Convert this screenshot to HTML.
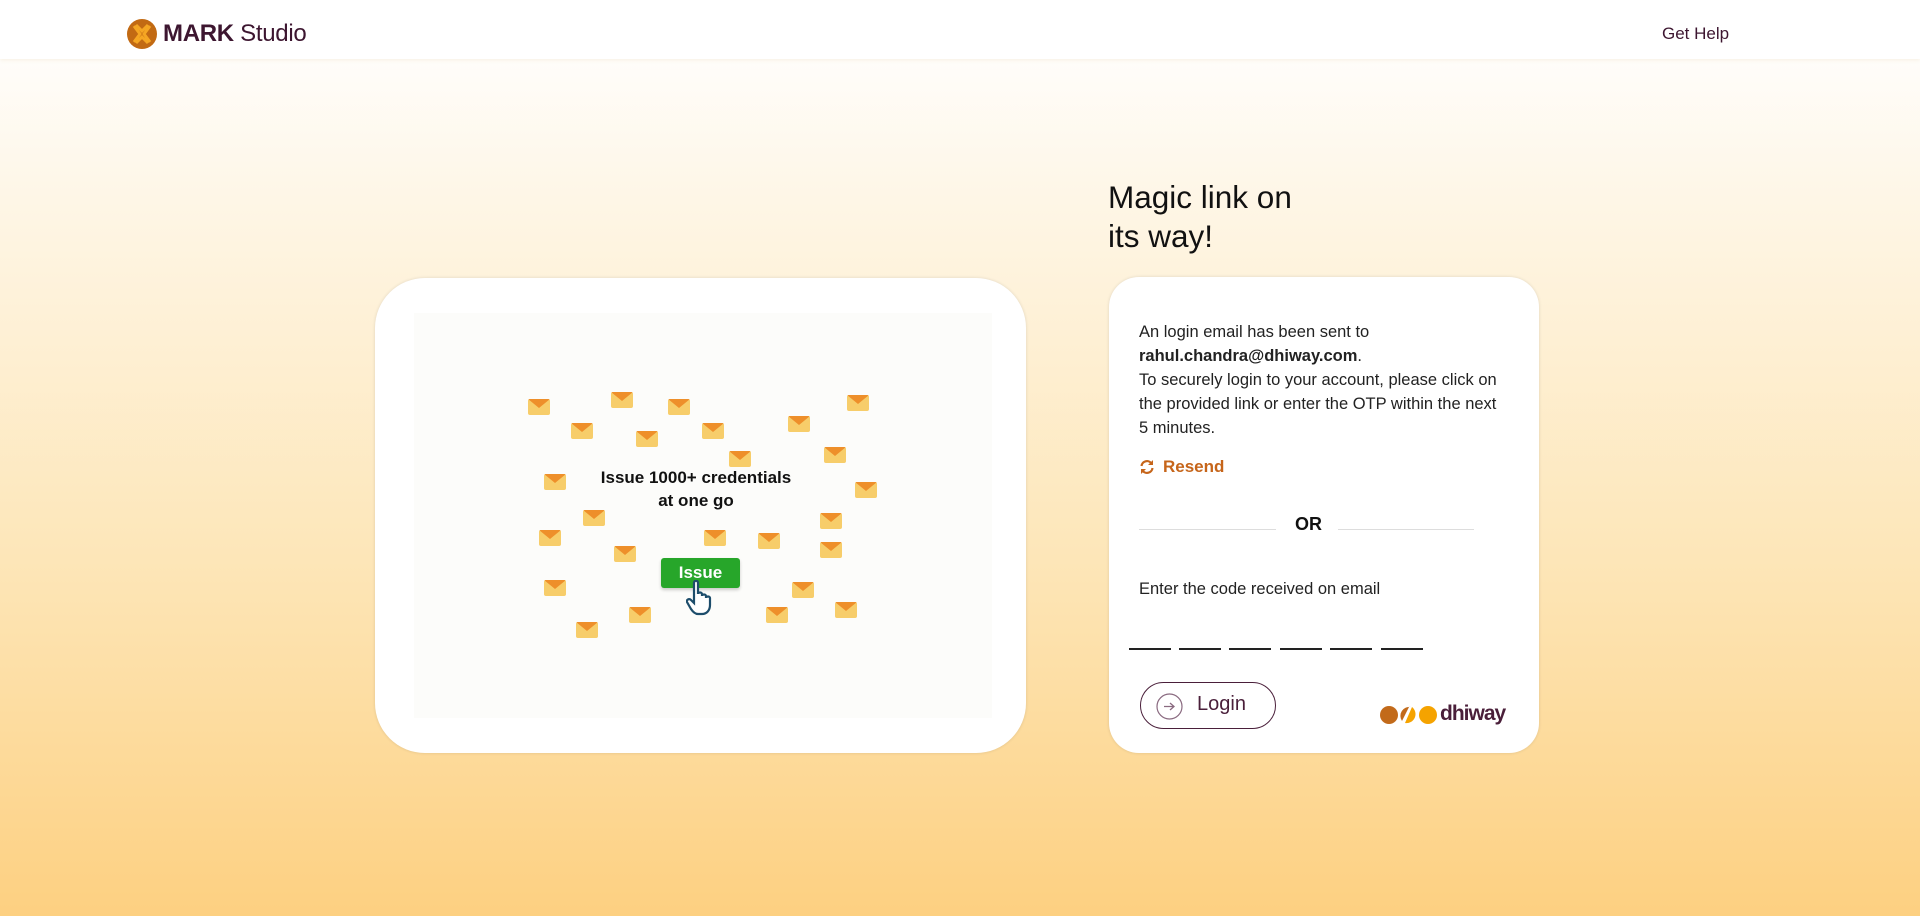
<!DOCTYPE html>
<html><head><style>
*{margin:0;padding:0;box-sizing:border-box}
body{width:1920px;height:916px;overflow:hidden;font-family:"Liberation Sans",sans-serif;background:linear-gradient(#fffdfa 59px,#fef6e6 200px,#fde6b8 560px,#fdd081 916px);position:relative;color:#1a1a1a}
.hdr{position:absolute;top:0;left:0;width:1920px;height:59px;background:#fff;box-shadow:0 1px 4px rgba(200,160,90,.15)}
.abs{position:absolute}
.card{position:absolute;background:#fff;box-shadow:0 0 3px rgba(0,0,0,.12)}
.env{position:absolute;width:22px;height:16px;background:#f7cd6a;border-radius:2px;overflow:hidden}
.env:after{content:"";position:absolute;left:0;top:0;border-left:11px solid transparent;border-right:11px solid transparent;border-top:9px solid #ee8f2a}
.p{position:absolute;left:1139px;font-size:16.5px;line-height:24px;color:#222}
.otp{position:absolute;top:648px;width:42px;height:1.5px;background:#222}
</style></head><body>
<div class="hdr"></div>
<svg class="abs" style="left:127px;top:19px" width="30" height="30" viewBox="0 0 30 30"><circle cx="15" cy="15" r="15" fill="#c26a13"/><path d="M7 7l6 8-6 8M23 7l-6 8 6 8M9 6l6 6 6-6M9 24l6-6 6 6" stroke="#f5a623" stroke-width="3" fill="none"/></svg>
<div class="abs" style="left:163px;top:20px;font-size:24px;color:#3d1630;letter-spacing:-0.3px"><b>MARK</b> Studio</div>
<div class="abs" style="left:1662px;top:24px;font-size:17px;color:#3d1630">Get Help</div>

<div class="card" style="left:375px;top:278px;width:651px;height:475px;border-radius:50px"></div>
<div class="abs" style="left:414px;top:313px;width:578px;height:405px;background:#fcfcfa"></div>
<div class="env" style="left:528px;top:399px"></div><div class="env" style="left:611px;top:392px"></div><div class="env" style="left:668px;top:399px"></div><div class="env" style="left:847px;top:395px"></div><div class="env" style="left:571px;top:423px"></div><div class="env" style="left:636px;top:431px"></div><div class="env" style="left:702px;top:423px"></div><div class="env" style="left:788px;top:416px"></div><div class="env" style="left:729px;top:451px"></div><div class="env" style="left:824px;top:447px"></div><div class="env" style="left:544px;top:474px"></div><div class="env" style="left:855px;top:482px"></div><div class="env" style="left:583px;top:510px"></div><div class="env" style="left:820px;top:513px"></div><div class="env" style="left:539px;top:530px"></div><div class="env" style="left:704px;top:530px"></div><div class="env" style="left:758px;top:533px"></div><div class="env" style="left:614px;top:546px"></div><div class="env" style="left:820px;top:542px"></div><div class="env" style="left:544px;top:580px"></div><div class="env" style="left:792px;top:582px"></div><div class="env" style="left:835px;top:602px"></div><div class="env" style="left:629px;top:607px"></div><div class="env" style="left:766px;top:607px"></div><div class="env" style="left:576px;top:622px"></div>
<div class="abs" style="left:560px;top:466px;width:272px;text-align:center;font-size:17px;font-weight:bold;line-height:23px;color:#111">Issue 1000+ credentials<br>at one go</div>
<div class="abs" style="left:661px;top:558px;width:79px;height:30px;background:#27a62a;border-radius:3px;color:#fff;font-weight:bold;font-size:17px;text-align:center;line-height:30px;box-shadow:0 2px 3px rgba(0,0,0,.2)">Issue</div>
<svg class="abs" style="left:686px;top:580px" width="30" height="36" viewBox="0 0 30 36"><path d="M8 3c0-3 4-3 4 0v11c0-2 4-2 4 0v2c0-2 4-2 4 0v2c0-2 4-2 4 0v7c0 5-3 9-8 9h-4c-3 0-5-2-7-5l-4-7c-1-2 2-4 4-2l3 3z" fill="#fff" stroke="#1d4d6b" stroke-width="2.2"/></svg>

<div class="abs" style="left:1108px;top:178px;font-size:31.5px;line-height:39px;color:#111">Magic link on<br>its way!</div>
<div class="card" style="left:1109px;top:277px;width:430px;height:476px;border-radius:30px"></div>
<div class="p" style="top:320px">An login email has been sent to<br><b>rahul.chandra@dhiway.com</b>.<br>To securely login to your account, please click on<br>the provided link or enter the OTP within the next<br>5 minutes.</div>
<svg class="abs" style="left:1139px;top:459px" width="16" height="16" viewBox="0 0 16 16"><path d="M2.5 7A5.5 5.5 0 0 1 12.5 4.5M13.5 9A5.5 5.5 0 0 1 3.5 11.5" stroke="#c6651a" stroke-width="2.2" fill="none"/><path d="M14 1v5h-5zM2 15v-5h5z" fill="#c6651a"/></svg>
<div class="abs" style="left:1163px;top:457px;font-size:17px;font-weight:bold;color:#c6651a">Resend</div>
<div class="abs" style="left:1139px;top:529px;width:137px;height:1px;background:#ddd"></div>
<div class="abs" style="left:1338px;top:529px;width:136px;height:1px;background:#ddd"></div>
<div class="abs" style="left:1295px;top:514px;font-size:18px;font-weight:bold;color:#111">OR</div>
<div class="p" style="top:577px">Enter the code received on email</div>
<div class="otp" style="left:1129px"></div><div class="otp" style="left:1179px"></div><div class="otp" style="left:1229px"></div><div class="otp" style="left:1280px"></div><div class="otp" style="left:1330px"></div><div class="otp" style="left:1381px"></div>
<div class="abs" style="left:1140px;top:682px;width:136px;height:47px;border:1.5px solid #4a1f3a;border-radius:24px"></div>
<svg class="abs" style="left:1156px;top:693px" width="27" height="27" viewBox="0 0 27 27"><circle cx="13.5" cy="13.5" r="12.5" fill="none" stroke="#8a6a80" stroke-width="1.2"/><path d="M8 13.5h10M14 10l4 3.5-4 3.5" stroke="#8a6a80" stroke-width="1.3" fill="none"/></svg>
<div class="abs" style="left:1197px;top:693px;font-size:20px;font-weight:500;color:#4a1f3a">Login</div>
<svg class="abs" style="left:1379px;top:704px" width="60" height="22" viewBox="0 0 60 22"><circle cx="10" cy="11" r="9" fill="#c26a1a"/><path d="M32 3a9 9 0 0 0-9 14l7-14z" fill="#c26a1a"/><path d="M33 3l-7 16a9 9 0 0 0 7-16z" fill="#f5a300"/><circle cx="49" cy="11" r="9" fill="#f5a300"/></svg>
<div class="abs" style="left:1440px;top:702px;font-size:21px;font-weight:bold;color:#4a1f3a;letter-spacing:-1px">dhiway</div>
</body></html>
